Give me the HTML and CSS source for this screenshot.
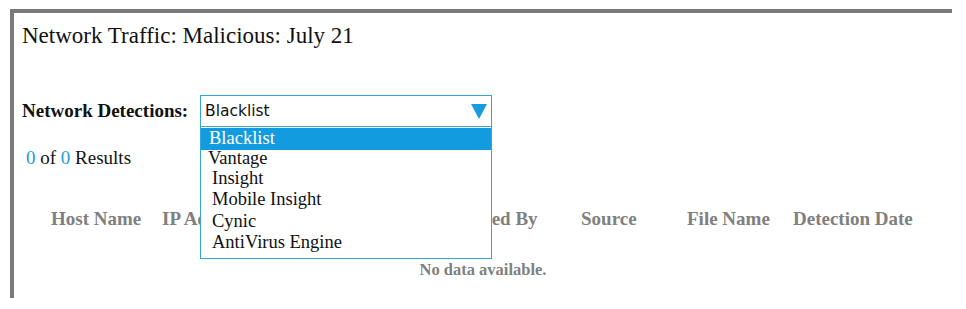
FILE: index.html
```html
<!DOCTYPE html>
<html>
<head>
<meta charset="UTF-8" />
<title>Network Traffic</title>
<link rel="stylesheet" href="styles.css">
</head>
<body>
<div class="panel">
	<p class="title">Network Traffic: Malicious: July 21</p>

	<div class="filter">
		<span class="filter-label">Network Detections:</span>
		<div class="picker">
			<div class="picker-box">
				<span class="picker-value">Blacklist</span>
				<svg class="picker-arrow" width="16" height="15" viewBox="0 0 16 15"><polygon points="0,0 16,0 8,15" fill="#1a9be0"/></svg>
			</div>
			<ul class="picker-list">
				<li class="selected">Blacklist</li>
				<li class="shift">Vantage</li>
				<li>Insight</li>
				<li>Mobile Insight</li>
				<li>Cynic</li>
				<li>AntiVirus Engine</li>
			</ul>
		</div>
	</div>

	<p class="count"><span class="num">0</span> of <span class="num">0</span> Results</p>

	<div class="thead">
		<div class="col c1">Host Name</div>
		<div class="col c2">IP Address</div>
		<div class="col c3">Detected By</div>
		<div class="col c4">Source</div>
		<div class="col c5">File Name</div>
		<div class="col c6">Detection Date</div>
	</div>
	<p class="empty">No data available.</p>
</div>
</body>
</html>
```

FILE: styles.css
```css
body {
	margin: 0;
	background: white;
	font-family: "Liberation Serif", "Times New Roman", serif;
	color: #111;
}

p {
	margin: 0;
}

.panel {
	margin-top: 9px;
	margin-left: 10px;
	width: 938px;
	height: 285px;
	border-top: 4px solid #7a7a7a;
	border-left: 4px solid #7a7a7a;
}

.title {
	font-size: 23px;
	padding-top: 10px;
	padding-left: 8px;
}

.filter {
	display: flex;
	align-items: center;
	margin-top: 46px;
	padding-left: 8px;
}

.filter-label {
	font-weight: bold;
	font-size: 19px;
	width: 178px;
}

.picker {
	position: relative;
}

.picker-box {
	box-sizing: border-box;
	width: 292px;
	height: 32px;
	border: 1px solid #35a6dc;
	display: flex;
	align-items: center;
	justify-content: space-between;
	padding: 0 4px 0 4px;
}

.picker-value {
	font-family: "DejaVu Sans", Tahoma, sans-serif;
	font-size: 15.5px;
	color: #111;
}

.picker-arrow {
	margin-top: 1px;
}

.picker-list {
	position: absolute;
	top: 31px;
	left: 0;
	box-sizing: border-box;
	width: 292px;
	margin: 0;
	padding: 0 0 4px 0;
	list-style: none;
	background: white;
	border: 1px solid #35a6dc;
	font-size: 18.5px;
	z-index: 2;
}

.picker-list li {
	height: 21.5px;
	line-height: 21px;
	padding-left: 11px;
}

.picker-list li.selected {
	background: #139be0;
	color: white;
	padding-left: 8px;
	margin-top: 1px;
}

.picker-list li.shift {
	padding-left: 7px;
	line-height: 17px;
	height: 18px;
}

.count {
	font-size: 19px;
	margin-top: 20px;
	padding-left: 12px;
}

.num {
	color: #2a9bd6;
}

.thead {
	display: flex;
	margin-top: 39px;
	font-weight: bold;
	font-size: 19px;
	color: #808080;
}

.col {
	flex: none;
}

.c1 { width: 111px; margin-left: 37px; }
.c2 { width: 278px; }
.c3 { width: 141px; }
.c4 { width: 106px; }
.c5 { width: 106px; }

.empty {
	text-align: center;
	font-weight: bold;
	font-size: 16.5px;
	color: #808080;
	margin-top: 30px;
}
```
